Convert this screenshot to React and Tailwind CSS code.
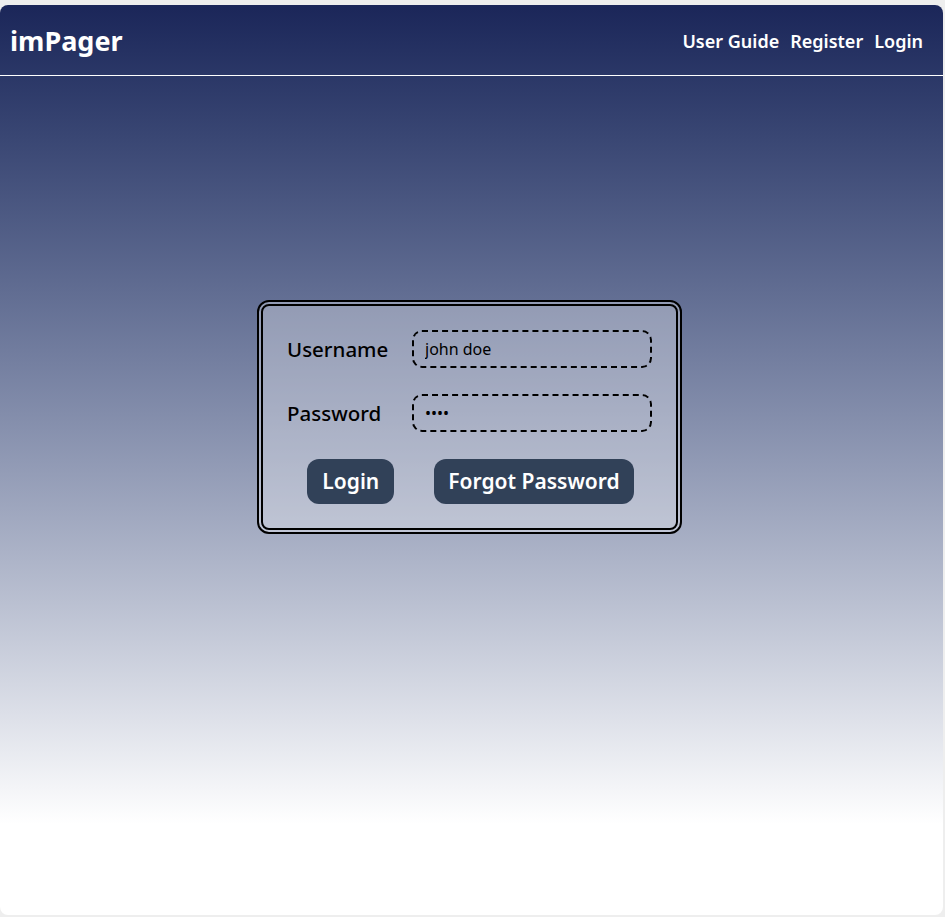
import React from 'react';

const font = { fontFamily: '"Noto Sans", "Open Sans", sans-serif' };

function Header() {
    return (
        <div className="flex items-center justify-between h-[71px] pt-[2px] px-[10px] border-b border-white">
            <h1 className="text-[27px] font-bold text-white">imPager</h1>
            <nav className="flex gap-[11px] pr-[10px] text-[18px] font-semibold text-white">
                <a href="#">User Guide</a>
                <a href="#">Register</a>
                <a href="#">Login</a>
            </nav>
        </div>
    );
}

function Field({ label, value, type }) {
    return (
        <div className="flex items-center">
            <label className="w-[126px] text-[20.5px] font-medium text-black">{label}</label>
            <input
                type={type}
                defaultValue={value}
                className="w-[240px] h-[38px] px-[11px] text-[16px] text-black bg-transparent border-2 border-dashed border-black rounded-[10px] outline-none"
            />
        </div>
    );
}

export default function App() {
    return (
        <div className="bg-[#eeeeee] pt-[5px] pr-[2px] pb-[2px] min-h-[917px]" style={font}>
            <div className="h-[910px] rounded-lg bg-gradient-to-b from-[#1b2659] from-0% to-white to-[90%]">
                <Header />
                <div className="flex justify-center pt-[224px] pr-[4px]">
                    <div className="w-[425px] border-[6px] border-double border-black rounded-[12px] bg-white/30 px-[24px] pt-[24px] pb-[24px] flex flex-col gap-[26px]">
                        <Field label="Username" value="john doe" type="text" />
                        <Field label="Password" value="1234" type="password" />
                        <div className="flex justify-center gap-10 pl-[2px] mt-[1px]">
                            <button className="h-[45px] px-[15px] rounded-xl bg-slate-700 text-white text-[21px] font-semibold">
                                Login
                            </button>
                            <button className="h-[45px] px-[14px] rounded-xl bg-slate-700 text-white text-[21px] font-semibold">
                                Forgot Password
                            </button>
                        </div>
                    </div>
                </div>
            </div>
        </div>
    );
}
